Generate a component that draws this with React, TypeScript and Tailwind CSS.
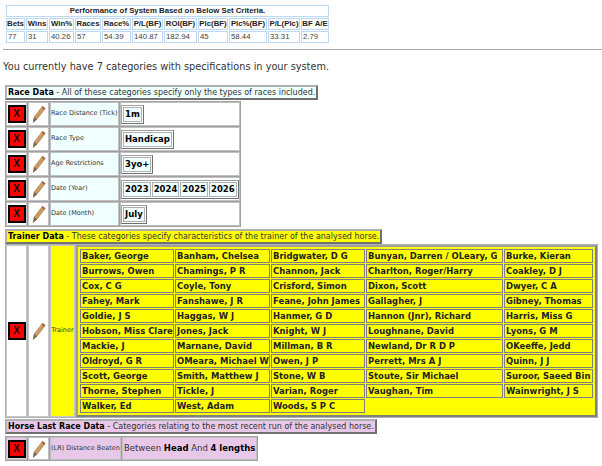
const perfHead = ["Bets", "Wins", "Win%", "Races", "Race%", "P/L(BF)", "ROI(BF)", "Plc(BF)", "Plc%(BF)", "P/L(Plc)", "BF A/E"];
const perfVals = ["77", "31", "40.26", "57", "54.39", "140.87", "182.94", "45", "58.44", "33.31", "2.79"];
const perfWidths = ["w-[19px]", "w-[22px]", "w-[25px]", "w-[26px]", "w-[29px]", "w-[31px]", "w-[33px]", "w-[30px]", "w-[38px]", "w-[32px]", "w-[28px]"];

const raceRows = [
  { label: "Race Distance (Tick)", values: ["1m"] },
  { label: "Race Type", values: ["Handicap"] },
  { label: "Age Restrictions", values: ["3yo+"] },
  { label: "Date (Year)", values: ["2023", "2024", "2025", "2026"] },
  { label: "Date (Month)", values: ["July"] },
];

const trainers = [
  ["Baker, George", "Banham, Chelsea", "Bridgwater, D G", "Bunyan, Darren / OLeary, G", "Burke, Kieran"],
  ["Burrows, Owen", "Chamings, P R", "Channon, Jack", "Charlton, Roger/Harry", "Coakley, D J"],
  ["Cox, C G", "Coyle, Tony", "Crisford, Simon", "Dixon, Scott", "Dwyer, C A"],
  ["Fahey, Mark", "Fanshawe, J R", "Feane, John James", "Gallagher, J", "Gibney, Thomas"],
  ["Goldie, J S", "Haggas, W J", "Hanmer, G D", "Hannon (Jnr), Richard", "Harris, Miss G"],
  ["Hobson, Miss Clare", "Jones, Jack", "Knight, W J", "Loughnane, David", "Lyons, G M"],
  ["Mackie, J", "Marnane, David", "Millman, B R", "Newland, Dr R D P", "OKeeffe, Jedd"],
  ["Oldroyd, G R", "OMeara, Michael W", "Owen, J P", "Perrett, Mrs A J", "Quinn, J J"],
  ["Scott, George", "Smith, Matthew J", "Stone, W B", "Stoute, Sir Michael", "Suroor, Saeed Bin"],
  ["Thorne, Stephen", "Tickle, J", "Varian, Roger", "Vaughan, Tim", "Wainwright, J S"],
  ["Walker, Ed", "West, Adam", "Woods, S P C"],
];
const trainerWidths = ["w-[94px]", "w-[95px]", "w-[94px]", "w-[137px]", "w-[89px]"];

function Pencil() {
  return (
    <svg viewBox="0 0 14 18" className="mx-auto block h-[18px] w-[14px]">
      <path d="M1.2 17.4 L2.2 12 L10.6 1.2 L13.2 3.4 L5 14.2 Z" fill="#cf9a5e" stroke="#a5845c" strokeWidth="0.7" />
      <path d="M10.6 1.2 L13.2 3.4 L12.2 4.7 L9.6 2.5 Z" fill="#a8604a" />
      <path d="M1.2 17.4 L2.2 12 L5 14.2 Z" fill="#75675a" />
    </svg>
  );
}

function RemoveButton() {
  return (
    <div className="mx-auto flex h-[18px] w-[18px] items-center justify-center border-2 border-black bg-[#ff0000] text-[10px] font-bold leading-none text-[#111] [font-family:'Liberation_Sans',sans-serif]">
      X
    </div>
  );
}

function SectionTitle({ title, text, bg }: { title: string; text: string; bg: string }) {
  return (
    <div className={`ml-[5px] h-[15px] w-fit whitespace-nowrap border-2 border-[#b0b0b0] border-r-[#707070] border-b-[#707070] px-[1px] text-[8px] leading-[11px] text-[#333] ${bg}`}>
      <b className="text-black">{title}</b> - {text}
    </div>
  );
}

export default function App() {
  return (
    <div className="h-[466px] w-[602px] overflow-hidden bg-white text-black [font-family:'DejaVu_Sans',sans-serif]">
      <div className="pl-[5px] pt-[4px]">
        <table className="border-separate border-spacing-[1px] text-[7.8px] leading-[10px] [font-family:'Liberation_Sans',sans-serif]">
          <tbody>
            <tr>
              <td colSpan={11} className="h-[12px] border border-[#bcd8f2] p-0 text-center font-bold text-[#222]">
                Performance of System Based on Below Set Criteria.
              </td>
            </tr>
            <tr>
              {perfHead.map((h, i) => (
                <td key={h} className={`h-[12px] whitespace-nowrap border border-[#bcd8f2] p-0 text-center font-bold text-[#222] ${perfWidths[i]}`}>
                  {h}
                </td>
              ))}
            </tr>
            <tr>
              {perfVals.map((v) => (
                <td key={v} className="h-[12px] border border-[#bcd8f2] p-0 pl-[1px] text-[#444]">
                  {v}
                </td>
              ))}
            </tr>
          </tbody>
        </table>
      </div>

      <div className="ml-[3px] mt-[5px] h-[1px] bg-[#a8a8a8]" />
      <p className="ml-[3px] mt-[10px] h-[25px] whitespace-nowrap text-[9.75px] leading-[14px] text-[#333]">
        You currently have 7 categories with specifications in your system.
      </p>

      <SectionTitle title="Race Data" text="All of these categories specify only the types of races included." bg="bg-[#f0ffff]" />

      <table className="ml-[5px] mt-[1px] border-separate border-spacing-[1px] bg-[#a0a0a0]">
        <tbody>
          {raceRows.map((row) => (
            <tr key={row.label} className="h-[24px]">
              <td className="w-[21px] border border-[#c0c0c0] bg-white p-0 align-middle">
                <RemoveButton />
              </td>
              <td className="w-[21px] border border-[#c0c0c0] bg-white p-0">
                <Pencil />
              </td>
              <td className="w-[69px] whitespace-nowrap border border-[#c0c0c0] bg-[#f0ffff] p-0 text-[6.5px] text-[#333]">
                {row.label}
              </td>
              <td className="w-[119px] border border-[#c0c0c0] bg-white p-0">
                <div className="flex w-fit gap-[1px] border border-[#a0a0a0] border-r-[#707070] border-b-[#707070] p-[1px]">
                  {row.values.map((v) => (
                    <span key={v} className="border border-[#b0b0b0] bg-[#f0ffff] px-[1px] text-[8.5px] font-bold leading-[13px]">
                      {v}
                    </span>
                  ))}
                </div>
              </td>
            </tr>
          ))}
        </tbody>
      </table>

      <div className="mt-[2px]">
        <SectionTitle title="Trainer Data" text="These categories specify characteristics of the trainer of the analysed horse." bg="bg-[#ffff00]" />
      </div>

      <table className="ml-[5px] border-separate border-spacing-[1px] bg-[#b0b0b0]">
        <tbody>
          <tr>
            <td className="w-[21px] border border-[#c8c8c8] bg-white p-0">
              <RemoveButton />
            </td>
            <td className="w-[21px] border border-[#c8c8c8] bg-white p-0">
              <Pencil />
            </td>
            <td className="w-[25px] border border-[#c8c8c8] bg-[#ffff00] p-0 text-center text-[6.5px] text-[#333]">Trainer</td>
            <td className="border-2 border-[#a0a0a0] border-r-[#808080] border-b-[#808080] bg-[#ffff00] p-[1px]">
              <table className="border-separate border-spacing-[1px]">
                <tbody>
                  {trainers.map((row) => (
                    <tr key={row[0]}>
                      {trainerWidths.map((w, i) => (
                        <td key={w + i} className={`${w} h-[14px] whitespace-nowrap p-0 pl-[1px] text-[8.45px] font-bold leading-[12px] text-[#222] ${row[i] ? "border border-[#808080]" : ""}`}>
                          {row[i]}
                        </td>
                      ))}
                    </tr>
                  ))}
                </tbody>
              </table>
            </td>
          </tr>
        </tbody>
      </table>

      <div className="mt-[1px]">
        <SectionTitle title="Horse Last Race Data" text="Categories relating to the most recent run of the analysed horse." bg="bg-[#e8c8e8]" />
      </div>

      <table className="ml-[5px] mt-[2px] border-separate border-spacing-[1px] bg-[#a0a0a0]">
        <tbody>
          <tr className="h-[23px]">
            <td className="w-[21px] border border-[#c0c0c0] bg-[#e8c8e8] p-0 align-middle">
              <RemoveButton />
            </td>
            <td className="w-[21px] border border-[#c0c0c0] bg-white p-0">
              <Pencil />
            </td>
            <td className="w-[70px] whitespace-nowrap border border-[#c0c0c0] bg-[#e8c8e8] p-0 text-[6.5px] text-[#333]">
              (LR) Distance Beaten
            </td>
            <td className="whitespace-nowrap border border-[#c0c0c0] bg-[#e8c8e8] px-[1px] text-[8.5px] text-[#333]">
              Between <b className="text-black">Head</b> And <b className="text-black">4 lengths</b>
            </td>
          </tr>
        </tbody>
      </table>
    </div>
  );
}
